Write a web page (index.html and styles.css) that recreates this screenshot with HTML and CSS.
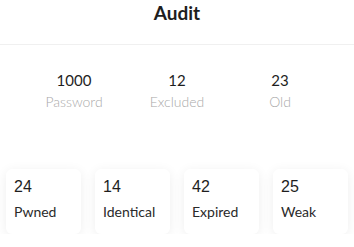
FILE: index.html
```html
<!DOCTYPE html>
<html lang="en">
<head>
    <meta charset="UTF-8">
    <meta name="viewport" content="width=device-width, initial-scale=1.0">
    <title>Audit</title>
    <link rel="stylesheet" href="styles.css">
</head>
<body>
    <div class="header">
        <h1>Audit</h1>
    </div>

    <div class="summary">
        <div class="stat">
            <div class="stat-value">1000</div>
            <div class="stat-label">Password</div>
        </div>
        <div class="stat">
            <div class="stat-value">12</div>
            <div class="stat-label">Excluded</div>
        </div>
        <div class="stat">
            <div class="stat-value">23</div>
            <div class="stat-label">Old</div>
        </div>
    </div>

    <div class="cards">
        <div class="card">
            <div class="card-value">24</div>
            <div class="card-label">Pwned</div>
        </div>
        <div class="card">
            <div class="card-value">14</div>
            <div class="card-label">Identical</div>
        </div>
        <div class="card">
            <div class="card-value">42</div>
            <div class="card-label">Expired</div>
        </div>
        <div class="card">
            <div class="card-value">25</div>
            <div class="card-label">Weak</div>
        </div>
    </div>
</body>
</html>
```

FILE: styles.css
```css
:root {
    --text: #1e1e1e;
    --muted: #a9a9a9;
}
body {
    font-family: 'Lato', sans-serif;
    margin: 0;
    background: #fff;
    color: var(--text);
}
.header {
    height: 44px;
    border-bottom: 1px solid #f0f0f0;
    text-align: center;
}
h1 {
    margin: 0;
    padding-top: 1px;
    font-size: 19px;
    font-weight: bold;
    line-height: 24px;
}
.summary {
    display: grid;
    grid-template-columns: repeat(3, 103px);
    justify-content: center;
    padding-top: 25px;
    text-align: center;
}
.stat-value {
    font-size: 15px;
    line-height: 20px;
}
.stat-label {
    font-size: 14px;
    line-height: 20px;
    margin-top: 2px;
    color: var(--muted);
    font-weight: 300;
}
.cards {
    display: grid;
    grid-template-columns: repeat(4, 75px);
    gap: 14px;
    padding: 0 6px;
    margin-top: 57px;
}
.card {
    height: 65px;
    background: #fff;
    border-radius: 6px;
    box-shadow: 0 2px 12px rgba(0,0,0,0.07);
    padding: 7px 8px 0;
    box-sizing: border-box;
}
.card-value {
    font-family: 'Liberation Sans', Arial, sans-serif;
    font-size: 16px;
    line-height: 22px;
}
.card-label {
    font-size: 14px;
    line-height: 20px;
    margin-top: 4px;
    color: #2a2a2a;
}
```
